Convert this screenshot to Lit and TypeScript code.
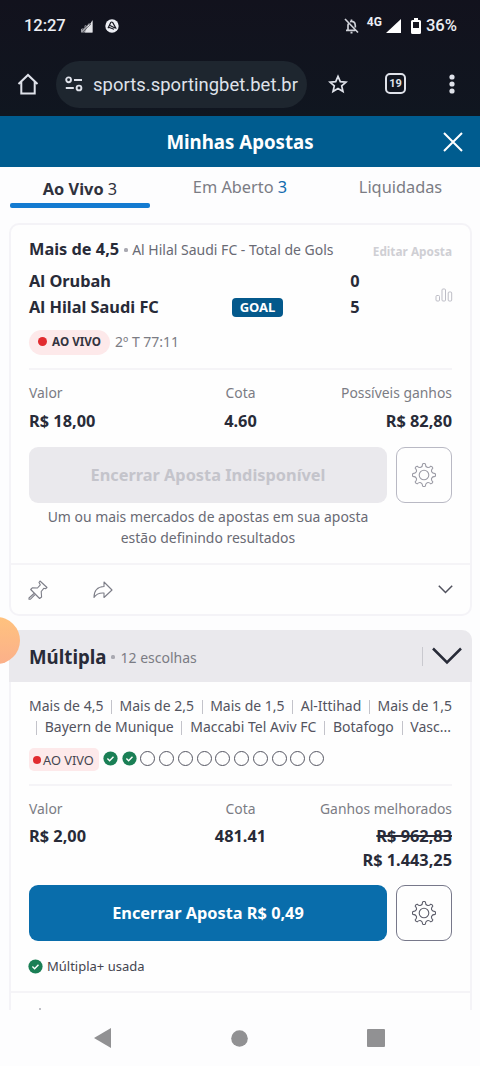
import { LitElement, html, css, svg } from "lit";
import { customElement, property } from "lit/decorators.js";

const polar = (deg: number, r: number) => {
  const a = (deg * Math.PI) / 180;
  return `${(12 + r * Math.sin(a)).toFixed(2)} ${(12 - r * Math.cos(a)).toFixed(2)}`;
};

/* Eight blunt teeth joined by concave valleys. */
const gearOutline =
  `M${polar(-7, 11.2)}` +
  Array.from({ length: 8 }, (_, k) => k * 45)
    .map((a) => `Q${polar(a, 12)} ${polar(a + 7, 11.2)}C${polar(a + 11, 7.6)} ${polar(a + 34, 7.6)} ${polar(a + 38, 11.2)}`)
    .join("") +
  "z";

const gear = svg`<path d=${gearOutline} stroke-linejoin="round" /><circle cx="12" cy="12" r="4.8" />`;

const tick = html`<svg width="15" height="15" viewBox="0 0 15 15">
  <circle cx="7.5" cy="7.5" r="7.1" fill="#1a7f55" />
  <path d="M4.4 7.6l2.2 2.1 3.9-4" fill="none" stroke="#fff" stroke-width="1.4" />
</svg>`;

@customElement("status-bar")
export class StatusBar extends LitElement {
  static styles = css`
    :host { display: flex; align-items: center; height: 52px; padding: 0 23px 0 24px; color: #eceef4;
      font: 500 17px/20px Roboto, sans-serif; box-sizing: border-box; }
    svg { display: block; flex: none; }
    .time { width: 57px; font-size: 16.6px; letter-spacing: -0.1px; }
    .bars { margin-right: 12px; }
    .grow { flex: 1; }
    .net { font-size: 12px; line-height: 12px; font-weight: 700; margin: 0 4px 9px 8px; }
    .signal { margin-right: 10px; }
    .battery { margin-right: 5px; }
    .level { font-size: 16.6px; }
  `;
  render() {
    return html`
      <span class="time">12:27</span>
      <svg class="bars" width="12" height="13" viewBox="0 0 12 13">
        <path d="M0 12.5V9l3-1 1-3 2 1 2-3 1 1 2.5-3.5V12.5z" fill="#9a9ba2" />
        <path d="M4 12.5L7 5l2 0 2.5-5v12.5z" fill="#e3e4e8" />
        <path d="M1 10l6-6M2 12l8-8" stroke="#3a3b43" stroke-width=".6" />
      </svg>
      <svg width="14" height="14" viewBox="0 0 14 14">
        <circle cx="7" cy="7" r="6.7" fill="#eceef4" />
        <path d="M3 9.3L5.6 3.7q1-1.4 2.2 0l3.4 6M3.6 8.2l5.4 2M5 6.5l5 2.5" fill="none" stroke="#171821" stroke-width="1.2" />
      </svg>
      <span class="grow"></span>
      <svg width="15" height="16" viewBox="0 0 15 16" fill="none" stroke="#cfd1d8" stroke-width="1.7">
        <path d="M1 1l13 13.5M2 12.3h9M4 12V7.5Q4 6 4.8 5M6 3.7Q11 2.5 11.3 7.5V9.5M7.5 3.5V1.5M6.5 14.7h2" />
      </svg>
      <span class="net">4G</span>
      <svg class="signal" width="15" height="14" viewBox="0 0 15 14"><path d="M0 14L15 0v14z" fill="#fff" /></svg>
      <svg class="battery" width="10" height="16" viewBox="0 0 10 16">
        <path d="M3 0h4v2h1.5q1.5 0 1.5 1.5v11q0 1.5-1.5 1.5h-7Q0 16 0 14.5v-11Q0 2 1.5 2H3z" fill="#fff" />
        <path d="M2 4h6v6H2z" fill="#151620" />
      </svg>
      <span class="level">36%</span>`;
  }
}

@customElement("browser-bar")
export class BrowserBar extends LitElement {
  static styles = css`
    :host { display: flex; align-items: center; height: 64px; padding: 0 20px 0 17px; color: #dfe2ea; box-sizing: border-box;
      font-family: Roboto, sans-serif; }
    svg { display: block; flex: none; }
    .pill { display: flex; align-items: center; box-sizing: border-box; width: 251px; height: 47px; margin: 0 21px 0 17px;
      padding-left: 9px; border-radius: 24px; background: #1e262f; gap: 10px; }
    .url { font-size: 18.4px; letter-spacing: 0.05px; white-space: nowrap; }
    .tabs { display: flex; align-items: center; justify-content: center; width: 21px; height: 21px; box-sizing: border-box;
      margin: -1px 43px 0 auto; border: 2px solid #dfe2ea; border-radius: 5px; font-size: 11px; font-weight: 700; }
    .more { margin-right: 5px; }
  `;
  render() {
    return html`
      <svg width="22" height="22" viewBox="0 0 22 22" fill="none" stroke="#dfe2ea" stroke-width="2">
        <path d="M1.5 11L11 2l9.5 9M4.3 9v11.5h13.4V9" />
      </svg>
      <div class="pill">
        <svg width="18" height="16" viewBox="0 0 18 16" fill="none" stroke="#dfe2ea" stroke-width="1.9">
          <circle cx="3.6" cy="3.8" r="2.4" /><path d="M9 4h8M0.8 12h8" /><circle cx="14" cy="12" r="2.4" />
        </svg>
        <span class="url">sports.sportingbet.bet.br</span>
      </div>
      <svg width="20" height="20" viewBox="0 0 20 20" fill="none" stroke="#dfe2ea" stroke-width="1.7">
        <path d="M10 2.3l2.3 5.3 5.8.5-4.4 3.8 1.3 5.7-5-3-5 3 1.3-5.7L1.9 8.1l5.8-.5z" />
      </svg>
      <span class="tabs">19</span>
      <svg class="more" width="6" height="20" viewBox="0 0 6 20" fill="#dfe2ea">
        <circle cx="3" cy="3" r="2.6" /><circle cx="3" cy="10" r="2.6" /><circle cx="3" cy="17" r="2.6" />
      </svg>`;
  }
}

@customElement("cash-out")
export class CashOut extends LitElement {
  @property() label = "";
  @property({ type: Boolean, reflect: true }) disabled = false;
  static styles = css`
    :host { display: flex; gap: 9px; height: 56px; --line: #77788a; }
    :host([disabled]) { --line: #b9b9c4; }
    .main { flex: 1; display: flex; align-items: center; justify-content: center; border-radius: 9px; background: #096dab;
      color: #fff; font-weight: 700; font-size: 16.33px; }
    :host([disabled]) .main { background: #eae9ed; color: #c4c4cb; }
    .gear { display: flex; align-items: center; justify-content: center; width: 56px; box-sizing: border-box;
      border: 1px solid var(--line); border-radius: 9px; }
    svg { display: block; }
  `;
  render() {
    return html`<div class="main">${this.label}</div>
      <div class="gear"><svg width="24" height="24" viewBox="0 0 24 24" fill="none" stroke=${this.disabled ? "#9c9ca6" : "#5d5e6b"} stroke-width="1.1">${gear}</svg></div>`;
  }
}

@customElement("app-root")
export class AppRoot extends LitElement {
  static styles = css`
    :host { display: flex; flex-direction: column; position: relative; width: 480px; height: 1066px; overflow: hidden;
      background: #fdfdfe; color: #282b38; font-family: "Noto Sans", sans-serif; font-size: 16.33px; white-space: nowrap; }
    svg { display: block; flex: none; }
    .chrome { background: linear-gradient(#12121d, #101620); height: 116px; flex: none; }
    .header { display: grid; grid-template-columns: 55px 1fr 55px; align-items: center; justify-items: center; flex: none;
      height: 51px; background: #005c8f; color: #fff; font-size: 18.67px; font-weight: 700; }
    .header .title { grid-column: 2; }
    .tabs { display: grid; grid-template-columns: repeat(3, 1fr); flex: none; height: 41px; text-align: center; color: #7b7c84;
      line-height: 41px; }
    .tab.active { display: flex; flex-direction: column; color: #30323d; line-height: 36px; height: 41px; box-sizing: border-box; }
    .tab.active .label { height: 36px; padding-top: 4px; box-sizing: border-box; }
    .underline { height: 4.5px; margin: 0 10px; background: #147bd1; border-radius: 2px; }
    .tab:last-child { padding-left: 1px; }
    .count { color: #136bae; }
    b { font-weight: 700; }
    .board { flex: none; height: 802px; overflow: hidden; padding: 15px 9px 0; box-sizing: border-box; display: flex; flex-direction: column; gap: 14px; }
    .card { flex: none; box-sizing: border-box; border: 2px solid #f4f3f7; border-radius: 10px; background: #fefefe; width: 463px; }
    .body { padding: 0 18px; display: flex; flex-direction: column; }
    .top { display: flex; align-items: center; height: 27px; margin-top: 10.5px; line-height: 27px; }
    .sep { width: 4px; height: 4px; border-radius: 1.5px; background: #a9a9b1; margin: 2px 5px 0; }
    .top .sep { margin-right: 4px; }
    .market { font-size: 14px; color: #696a74; }
    .edit { margin: 5px 0 0 auto; font-size: 11.8px; font-weight: 700; color: #cfcfd4; }
    .teams { display: grid; grid-template-columns: 203px 110px 26px 1fr; grid-template-rows: 26.5px 26.5px; align-items: center;
      margin-top: 5px; font-weight: 700; }
    .goal { justify-self: start; background: #04598c; color: #fff; border-radius: 4px; font-size: 13px; width: 51px; height: 19px;
      line-height: 19px; text-align: center; }
    .score { text-align: center; grid-column: 3; }
    .stats { grid-column: 4; grid-row: 1 / 3; justify-self: end; margin: 1px -1px 0 0; }
    .live { display: flex; align-items: center; height: 25px; margin-top: 9px; color: #7b7c84; font-size: 14px; gap: 5px; line-height: 22px; }
    .live > :last-child { margin-top: -1px; }
    .pill { display: flex; align-items: center; justify-content: center; gap: 5px; width: 81px; height: 25px; border-radius: 13px; background: #fde9ea;
      color: #333440; font-size: 11.67px; font-weight: 700; }
    .dot { width: 9px; height: 9px; border-radius: 50%; background: #e12b2f; margin-bottom: 2px; }
    .rule { height: 2px; background: #f5f4f7; margin-top: 13px; flex: none; }
    .live + .rule { margin-top: 13.5px; }
    .sums { display: grid; grid-template-columns: 1fr 1fr 1fr; margin-top: 13px; text-align: center; line-height: 24px; font-weight: 700; }
    .sums > :first-child { text-align: left; }
    .sums > :last-child { text-align: right; }
    .cap { font-size: 13.9px; line-height: 20px; font-weight: 400; color: #7b7c84; margin-bottom: 6px; }
    .multi .cap { margin-bottom: 5px; }
    .struck { text-decoration: line-through; text-decoration-thickness: 1.5px; }
    .note { width: 358px; margin-top: 4px; text-align: center; font-size: 13.95px; line-height: 20.5px; color: #696a74; }
    .foot { display: flex; align-items: center; height: 49px; padding: 0 17px; }
    .share { margin-left: 45px; }
    .open { margin-left: auto; }
    .card.multi { border-top: 0; border-bottom: 0; border-radius: 10px 10px 0 0; height: 400px; }
    .bar { display: flex; align-items: center; height: 52px; margin: 0 -2px; padding: 0 10px 0 20px; background: #eae9ed; border-radius: 10px 10px 0 0; }
    .name { font-size: 18.67px; font-weight: 700; }
    .picks { font-size: 14px; color: #7b7c84; margin-top: 2px; }
    .split { margin-left: auto; width: 1px; height: 19px; background: #c9c9cf; margin-right: 9px; }
    .legs { margin-top: 14px; font-size: 14px; line-height: 20.5px; color: #53545f; }
    .leg { display: flex; justify-content: space-between; }
    .leg.second { padding-left: 7px; padding-right: 1px; }
    .leg i { width: 1px; height: 14px; margin-top: 4px; background: #c3c3ca; }
    .progress { display: flex; align-items: center; margin-top: 11px; height: 23px; gap: 3.75px; }
    .progress > svg, .ring { margin-top: -2px; }
    .square { display: flex; align-items: center; gap: 2px; width: 70px; height: 23px; border-radius: 5px; background: #fde9ea;
      color: #444550; font-size: 12.8px; padding-left: 4px; box-sizing: border-box; }
    .square .dot { width: 8px; height: 8px; margin: 0; }
    .ring { width: 15px; height: 15px; border-radius: 50%; border: 1.3px solid #555662; box-sizing: border-box; flex: none; }
    .used { display: flex; align-items: center; gap: 4px; height: 20px; margin-top: 15px; margin-left: -1px; font-size: 13px; color: #44454f; }
    .peek { width: 2px; height: 2px; margin: 14.5px 0 0 28px; background: #c0c0c6; }
    .bubble { position: absolute; left: -27px; top: 617px; width: 47px; height: 47px; border-radius: 50%;
      background: linear-gradient(#ffc27e, #fbb08a); }
    .nav { flex: none; height: 56px; display: flex; align-items: center; justify-content: space-between; padding: 0 95px 0 94px; }
    .first-action { margin-top: 14px; }
    .second-action { margin-top: 13px; }
    .edge { margin-top: 15px; }
  `;

  private legs(names: string[], cls = "") {
    return html`<div class="leg ${cls}">
      ${cls ? html`<i></i>` : null}${names.map((n, k) => html`${k ? html`<i></i>` : null}<span>${n}</span>`)}
    </div>`;
  }

  render() {
    return html`
      <div class="chrome"><status-bar></status-bar><browser-bar></browser-bar></div>
      <div class="header">
        <span class="title">Minhas Apostas</span>
        <svg width="20" height="20" viewBox="0 0 20 20"><path d="M1 1l18 18M19 1L1 19" stroke="#fff" stroke-width="2" /></svg>
      </div>
      <div class="tabs">
        <div class="tab active"><div class="label"><b>Ao Vivo</b> 3</div><div class="underline"></div></div>
        <div class="tab">Em Aberto <span class="count">3</span></div>
        <div class="tab">Liquidadas</div>
      </div>
      <div class="board">
        <div class="card">
          <div class="body">
            <div class="top"><b>Mais de 4,5</b><span class="sep"></span><span class="market">Al Hilal Saudi FC - Total de Gols</span><span class="edit">Editar Aposta</span></div>
            <div class="teams">
              <span>Al Orubah</span><span></span><span class="score">0</span>
              <svg class="stats" width="18" height="14" viewBox="0 0 18 14" fill="none" stroke="#bdbdc6" stroke-width="1">
                <rect x="1" y="7.5" width="3.5" height="5.5" rx="1" /><rect x="7" y="1" width="3.5" height="12" rx="1" /><rect x="13.2" y="4" width="3.5" height="9" rx="1" />
              </svg>
              <span>Al Hilal Saudi FC</span><span class="goal">GOAL</span><span class="score">5</span>
            </div>
            <div class="live"><span class="pill"><span class="dot"></span>AO VIVO</span><span>2º T 77:11</span></div>
            <div class="rule"></div>
            <div class="sums">
              <div><div class="cap">Valor</div>R$ 18,00</div>
              <div><div class="cap">Cota</div>4.60</div>
              <div><div class="cap">Possíveis ganhos</div>R$ 82,80</div>
            </div>
            <cash-out class="first-action" label="Encerrar Aposta Indisponível" disabled></cash-out>
            <div class="note">Um ou mais mercados de apostas em sua aposta<br />estão definindo resultados</div>
          </div>
          <div class="rule edge"></div>
          <div class="foot">
            <svg width="20" height="20" viewBox="0 0 20 20" fill="none" stroke="#7d7e88" stroke-width="1.1" stroke-linejoin="round">
              <path d="M12 1l7 6.5-1.5 1.2-1.7-.4-2.6 3.2.4 5.500-2 1.500L2.700 9.500l1.600-1.700 5.200.2 2.800-3.200L11 2.500z" /><path d="M6 13.500L1 18v1.200h1.500L7 14.700" />
            </svg>
            <svg class="share" width="20" height="18" viewBox="0 0 20 18" fill="none" stroke="#7d7e88" stroke-width="1.1" stroke-linejoin="round">
              <path d="M11 1l8 8-8 7.5v-4.5Q4 11.5 1 16.5 1 6 11 5.5z" />
            </svg>
            <svg class="open" width="15" height="9" viewBox="0 0 15 9" fill="none" stroke="#50515d" stroke-width="1.5"><path d="M.8.8l6.7 6.7L14.2.8" /></svg>
          </div>
        </div>
        <div class="card multi">
          <div class="bar"><span class="name">Múltipla</span><span class="sep"></span><span class="picks">12 escolhas</span><span class="split"></span>
            <svg width="30" height="18" viewBox="0 0 30 18" fill="none" stroke="#282b38" stroke-width="2.5"><path d="M1 1.500L15 15.500 29 1.500" /></svg>
          </div>
          <div class="body">
            <div class="legs">
              ${this.legs(["Mais de 4,5", "Mais de 2,5", "Mais de 1,5", "Al-Ittihad", "Mais de 1,5"])}
              ${this.legs(["Bayern de Munique", "Maccabi Tel Aviv FC", "Botafogo", "Vasc..."], "second")}
            </div>
            <div class="progress"><span class="square"><span class="dot"></span>AO VIVO</span>${tick}${tick}${Array.from({ length: 10 }, () => html`<span class="ring"></span>`)}</div>
            <div class="rule"></div>
            <div class="sums">
              <div><div class="cap">Valor</div>R$ 2,00</div>
              <div><div class="cap">Cota</div>481.41</div>
              <div><div class="cap">Ganhos melhorados</div><div class="struck">R$ 962,83</div>R$ 1.443,25</div>
            </div>
            <cash-out class="second-action" label="Encerrar Aposta R$ 0,49"></cash-out>
            <div class="used">${tick}<span>Múltipla+ usada</span></div>
          </div>
          <div class="rule edge"></div>
          <div class="peek"></div>
        </div>
      </div>
      <div class="nav">
        <svg width="17" height="20" viewBox="0 0 17 20"><path d="M17 0v20L0 10z" fill="#919193" /></svg>
        <svg width="17" height="17" viewBox="0 0 17 17"><circle cx="8.5" cy="8.5" r="8.3" fill="#919193" /></svg>
        <svg width="18" height="18" viewBox="0 0 18 18"><rect width="18" height="18" rx="1" fill="#919193" /></svg>
      </div>
      <div class="bubble"></div>`;
  }
}
